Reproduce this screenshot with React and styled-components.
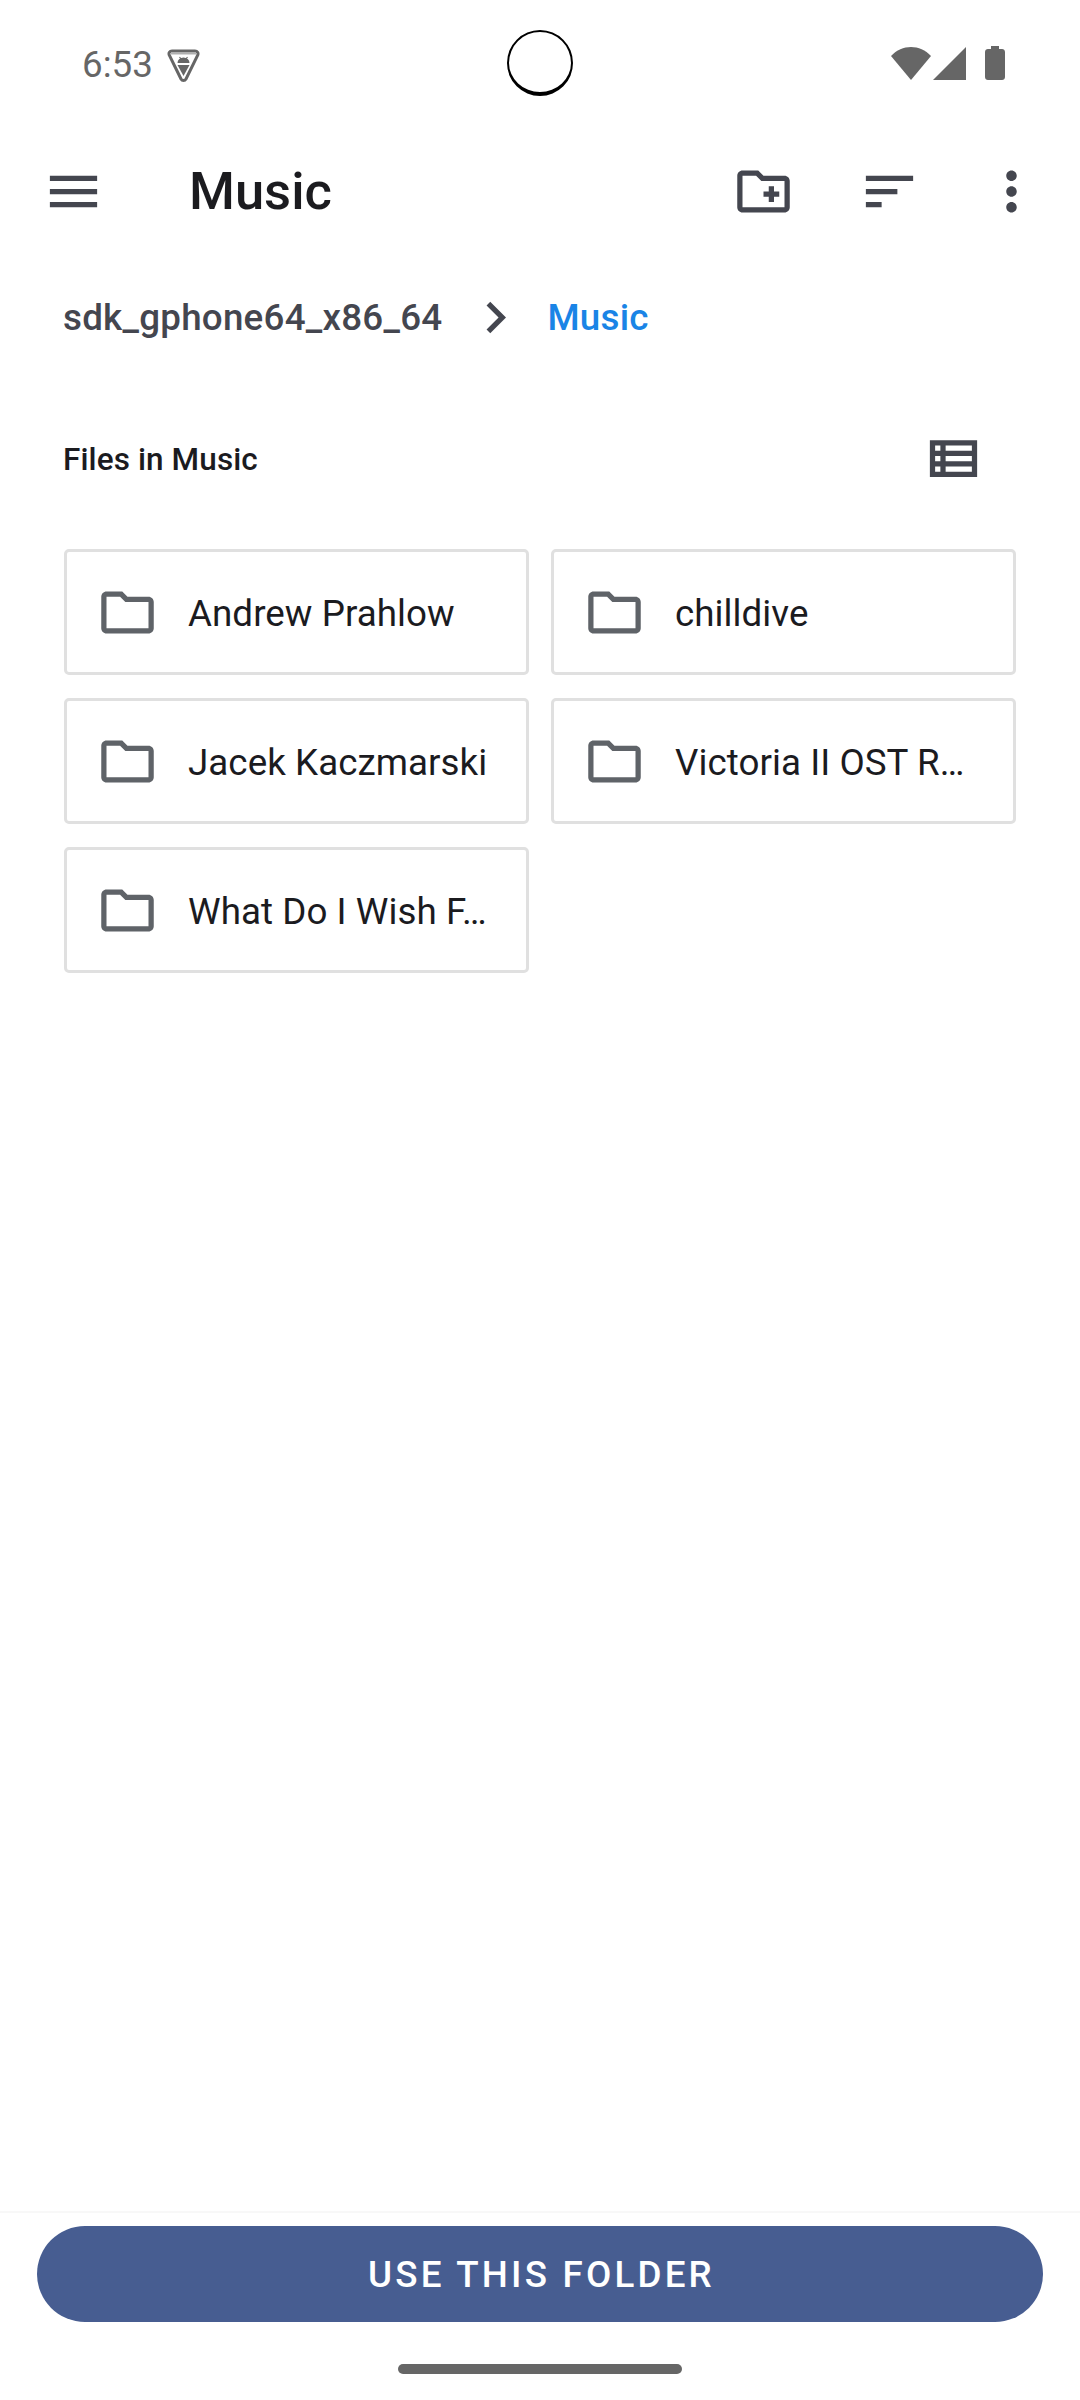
import React from 'react';
import styled, { createGlobalStyle } from 'styled-components';

const GlobalStyle = createGlobalStyle`
    html, body {
        margin: 0;
        padding: 0;
        background: #ffffff;
    }
    * {
        box-sizing: border-box;
    }
`;

const Screen = styled.div`
    width: 1080px;
    height: 2400px;
    display: flex;
    flex-direction: column;
    background: #ffffff;
    font-family: Roboto, "Noto Sans", sans-serif;
    overflow: hidden;
`;

const StatusBar = styled.div`
    height: 126px;
    flex: none;
    display: grid;
    grid-template-columns: 1fr 66px 1fr;
    align-items: center;
    padding: 0 75px;
`;

const StatusLeft = styled.div`
    display: flex;
    align-items: center;
    gap: 14px;
    padding: 5px 0 0 7px;
`;

const Clock = styled.span`
    font-size: 36.75px;
    color: #666666;
    line-height: 1;
`;

const Camera = styled.div`
    width: 66px;
    height: 66px;
    border-radius: 50%;
    border: 2px solid #000000;
    border-bottom-width: 4px;
`;

const StatusRight = styled.div`
    display: flex;
    align-items: center;
    justify-content: flex-end;
    gap: 2px;
`;

const BatteryWrap = styled.div`
    margin-left: 17px;
    display: flex;
`;

const Toolbar = styled.div`
    height: 130px;
    flex: none;
    display: flex;
    align-items: center;
    padding-left: 42px;
`;

const Title = styled.h1`
    margin: 0 0 0 84px;
    font-size: 52.5px;
    font-weight: 500;
    color: #1b1b1f;
`;

const Actions = styled.div`
    margin-left: auto;
    display: flex;
    align-items: center;
    padding-right: 9px;
`;

const IconButton = styled.div`
    width: ${({ $width }) => $width}px;
    display: flex;
    justify-content: center;
`;

const Icon = styled.svg`
    width: 63px;
    height: 63px;
    flex: none;
    display: block;
    fill: ${({ $color }) => $color || '#44464f'};
`;

const Breadcrumbs = styled.div`
    height: 122px;
    flex: none;
    display: flex;
    align-items: center;
    padding-left: 63px;
    font-size: 36.75px;
    font-weight: 500;
    letter-spacing: 0.24px;
    color: #44464f;
`;

const Crumb = styled.span`
    color: ${({ $active }) => ($active ? '#1a84e6' : '#44464f')};
`;

const CrumbSeparator = styled.div`
    margin: 0 20px 0 22px;
    display: flex;
`;

const SectionHeader = styled.div`
    height: 162px;
    flex: none;
    display: flex;
    align-items: center;
    justify-content: space-between;
    padding: 0 95px 0 63px;
    font-size: 31.5px;
    font-weight: 500;
    letter-spacing: 0.1px;
    color: #1b1b1f;
`;

const ViewToggle = styled.div`
    margin-top: -2px;
    display: flex;
`;

const FolderGrid = styled.div`
    margin-top: 9px;
    padding: 0 64px;
    display: grid;
    grid-template-columns: 465px 465px;
    grid-auto-rows: 126px;
    column-gap: 22px;
    row-gap: 23px;
`;

const FolderCard = styled.div`
    display: flex;
    align-items: center;
    gap: 29px;
    padding: 0 20px 0 29px;
    border: 3px solid #e0e0e0;
    border-radius: 5px;
    min-width: 0;
`;

const FolderName = styled.span`
    flex: 1;
    min-width: 0;
    padding-top: 2px;
    font-size: 36.75px;
    letter-spacing: 0.05px;
    color: #1b1b1f;
    white-space: nowrap;
`;

const Footer = styled.div`
    margin-top: auto;
    flex: none;
    height: 189px;
    border-top: 2px solid #f8f8f8;
    padding: 13px 37px 0;
    display: flex;
    flex-direction: column;
    align-items: center;
`;

const PrimaryButton = styled.button`
    width: 100%;
    height: 96px;
    flex: none;
    border: none;
    border-radius: 48px;
    padding: 0 0 0 3px;
    background: #475d91;
    color: #ffffff;
    font-family: inherit;
    font-size: 36.75px;
    font-weight: 500;
    letter-spacing: 3.2px;
`;

const HomeBar = styled.div`
    width: 284px;
    height: 10px;
    margin-top: 42px;
    border-radius: 5px;
    background: #666666;
`;

const MenuIcon = () => (
    <Icon viewBox="0 0 24 24"><path d="M3 18h18v-2H3v2zm0-5h18v-2H3v2zm0-7v2h18V6H3z" /></Icon>
);

const NewFolderIcon = () => (
    <Icon viewBox="0 0 24 24"><path d="M20 6h-8l-2-2H4c-1.11 0-1.99.89-1.99 2L2 18c0 1.11.89 2 2 2h16c1.11 0 2-.89 2-2V8c0-1.11-.89-2-2-2zm0 12H4V6h5.17l2 2H20v10zm-8-4h2v2h2v-2h2v-2h-2v-2h-2v2h-2v2z" /></Icon>
);

const SortIcon = () => (
    <Icon viewBox="0 0 24 24"><path d="M3 18h6v-2H3v2zM3 6v2h18V6H3zm0 7h12v-2H3v2z" /></Icon>
);

const MoreIcon = () => (
    <Icon viewBox="0 0 24 24"><path d="M12 8c1.1 0 2-.9 2-2s-.9-2-2-2-2 .9-2 2 .9 2 2 2zm0 2c-1.1 0-2 .9-2 2s.9 2 2 2 2-.9 2-2-.9-2-2-2zm0 6c-1.1 0-2 .9-2 2s.9 2 2 2 2-.9 2-2-.9-2-2-2z" /></Icon>
);

const ChevronIcon = () => (
    <Icon viewBox="0 0 24 24"><path d="M10 6L8.59 7.41 13.17 12l-4.58 4.59L10 18l6-6z" /></Icon>
);

const ListIcon = () => (
    <Icon viewBox="0 0 24 24"><path d="M3 5v14h18V5H3zm4 2v2H5V7h2zm-2 6v-2h2v2H5zm0 2h2v2H5v-2zm14 2H9v-2h10v2zm0-4H9v-2h10v2zm0-4H9V7h10v2z" /></Icon>
);

const FolderIcon = () => (
    <Icon viewBox="0 0 24 24" $color="#5f6368"><path d="M9.17 6l2 2H20v10H4V6h5.17M10 4H4c-1.1 0-1.99.9-1.99 2L2 18c0 1.1.9 2 2 2h16c1.1 0 2-.9 2-2V8c0-1.1-.9-2-2-2h-8l-2-2z" /></Icon>
);

const ShieldIcon = () => (
    <svg width="33" height="33" viewBox="0 0 33 33">
        <path d="M5 2h23c2.500 0 3.500 2 2.800 4L19 30c-1.200 2-3.800 2-5 0L2.200 6C1.500 4 2.500 2 5 2z" fill="none" stroke="#666666" strokeWidth="3" />
        <path d="M4 3h25v2.500H4z" fill="#b0b0b0" />
        <path d="M10.500 14a6 5.500 0 0 1 12 0z" fill="#666666" />
        <path d="M12.500 8l2 2.500M20.500 8l-2 2.500" stroke="#666666" strokeWidth="1.200" />
        <path d="M10.500 16h12L16.500 27z" fill="#666666" />
    </svg>
);

const WifiIcon = () => (
    <svg width="40" height="33" viewBox="0 0 40 33" fill="#666666">
        <path d="M0 9C11-3 29-3 40 9L20 33z" />
    </svg>
);

const SignalIcon = () => (
    <svg width="33" height="33" viewBox="0 0 33 33" fill="#666666">
        <path d="M33 0v33H0z" />
    </svg>
);

const BatteryIcon = () => (
    <svg width="20" height="34" viewBox="0 0 20 34" fill="#666666">
        <path d="M6 0h8v3h3c1.700 0 3 1.300 3 3v25c0 1.700-1.300 3-3 3H3c-1.700 0-3-1.300-3-3V6c0-1.700 1.300-3 3-3h3z" />
    </svg>
);

const folders = [
    'Andrew Prahlow',
    'chilldive',
    'Jacek Kaczmarski',
    'Victoria II OST R…',
    'What Do I Wish F…',
];

export default function App() {
    return (
        <Screen>
            <GlobalStyle />
            <StatusBar>
                <StatusLeft>
                    <Clock>6:53</Clock>
                    <ShieldIcon />
                </StatusLeft>
                <Camera />
                <StatusRight>
                    <WifiIcon />
                    <SignalIcon />
                    <BatteryWrap><BatteryIcon /></BatteryWrap>
                </StatusRight>
            </StatusBar>
            <Toolbar>
                <MenuIcon />
                <Title>Music</Title>
                <Actions>
                    <IconButton $width={126}><NewFolderIcon /></IconButton>
                    <IconButton $width={126}><SortIcon /></IconButton>
                    <IconButton $width={119}><MoreIcon /></IconButton>
                </Actions>
            </Toolbar>
            <Breadcrumbs>
                <Crumb>sdk_gphone64_x86_64</Crumb>
                <CrumbSeparator><ChevronIcon /></CrumbSeparator>
                <Crumb $active>Music</Crumb>
            </Breadcrumbs>
            <SectionHeader>
                <span>Files in Music</span>
                <ViewToggle><ListIcon /></ViewToggle>
            </SectionHeader>
            <FolderGrid>
                {folders.map((name) => (
                    <FolderCard key={name}>
                        <FolderIcon />
                        <FolderName>{name}</FolderName>
                    </FolderCard>
                ))}
            </FolderGrid>
            <Footer>
                <PrimaryButton>USE THIS FOLDER</PrimaryButton>
                <HomeBar />
            </Footer>
        </Screen>
    );
}
